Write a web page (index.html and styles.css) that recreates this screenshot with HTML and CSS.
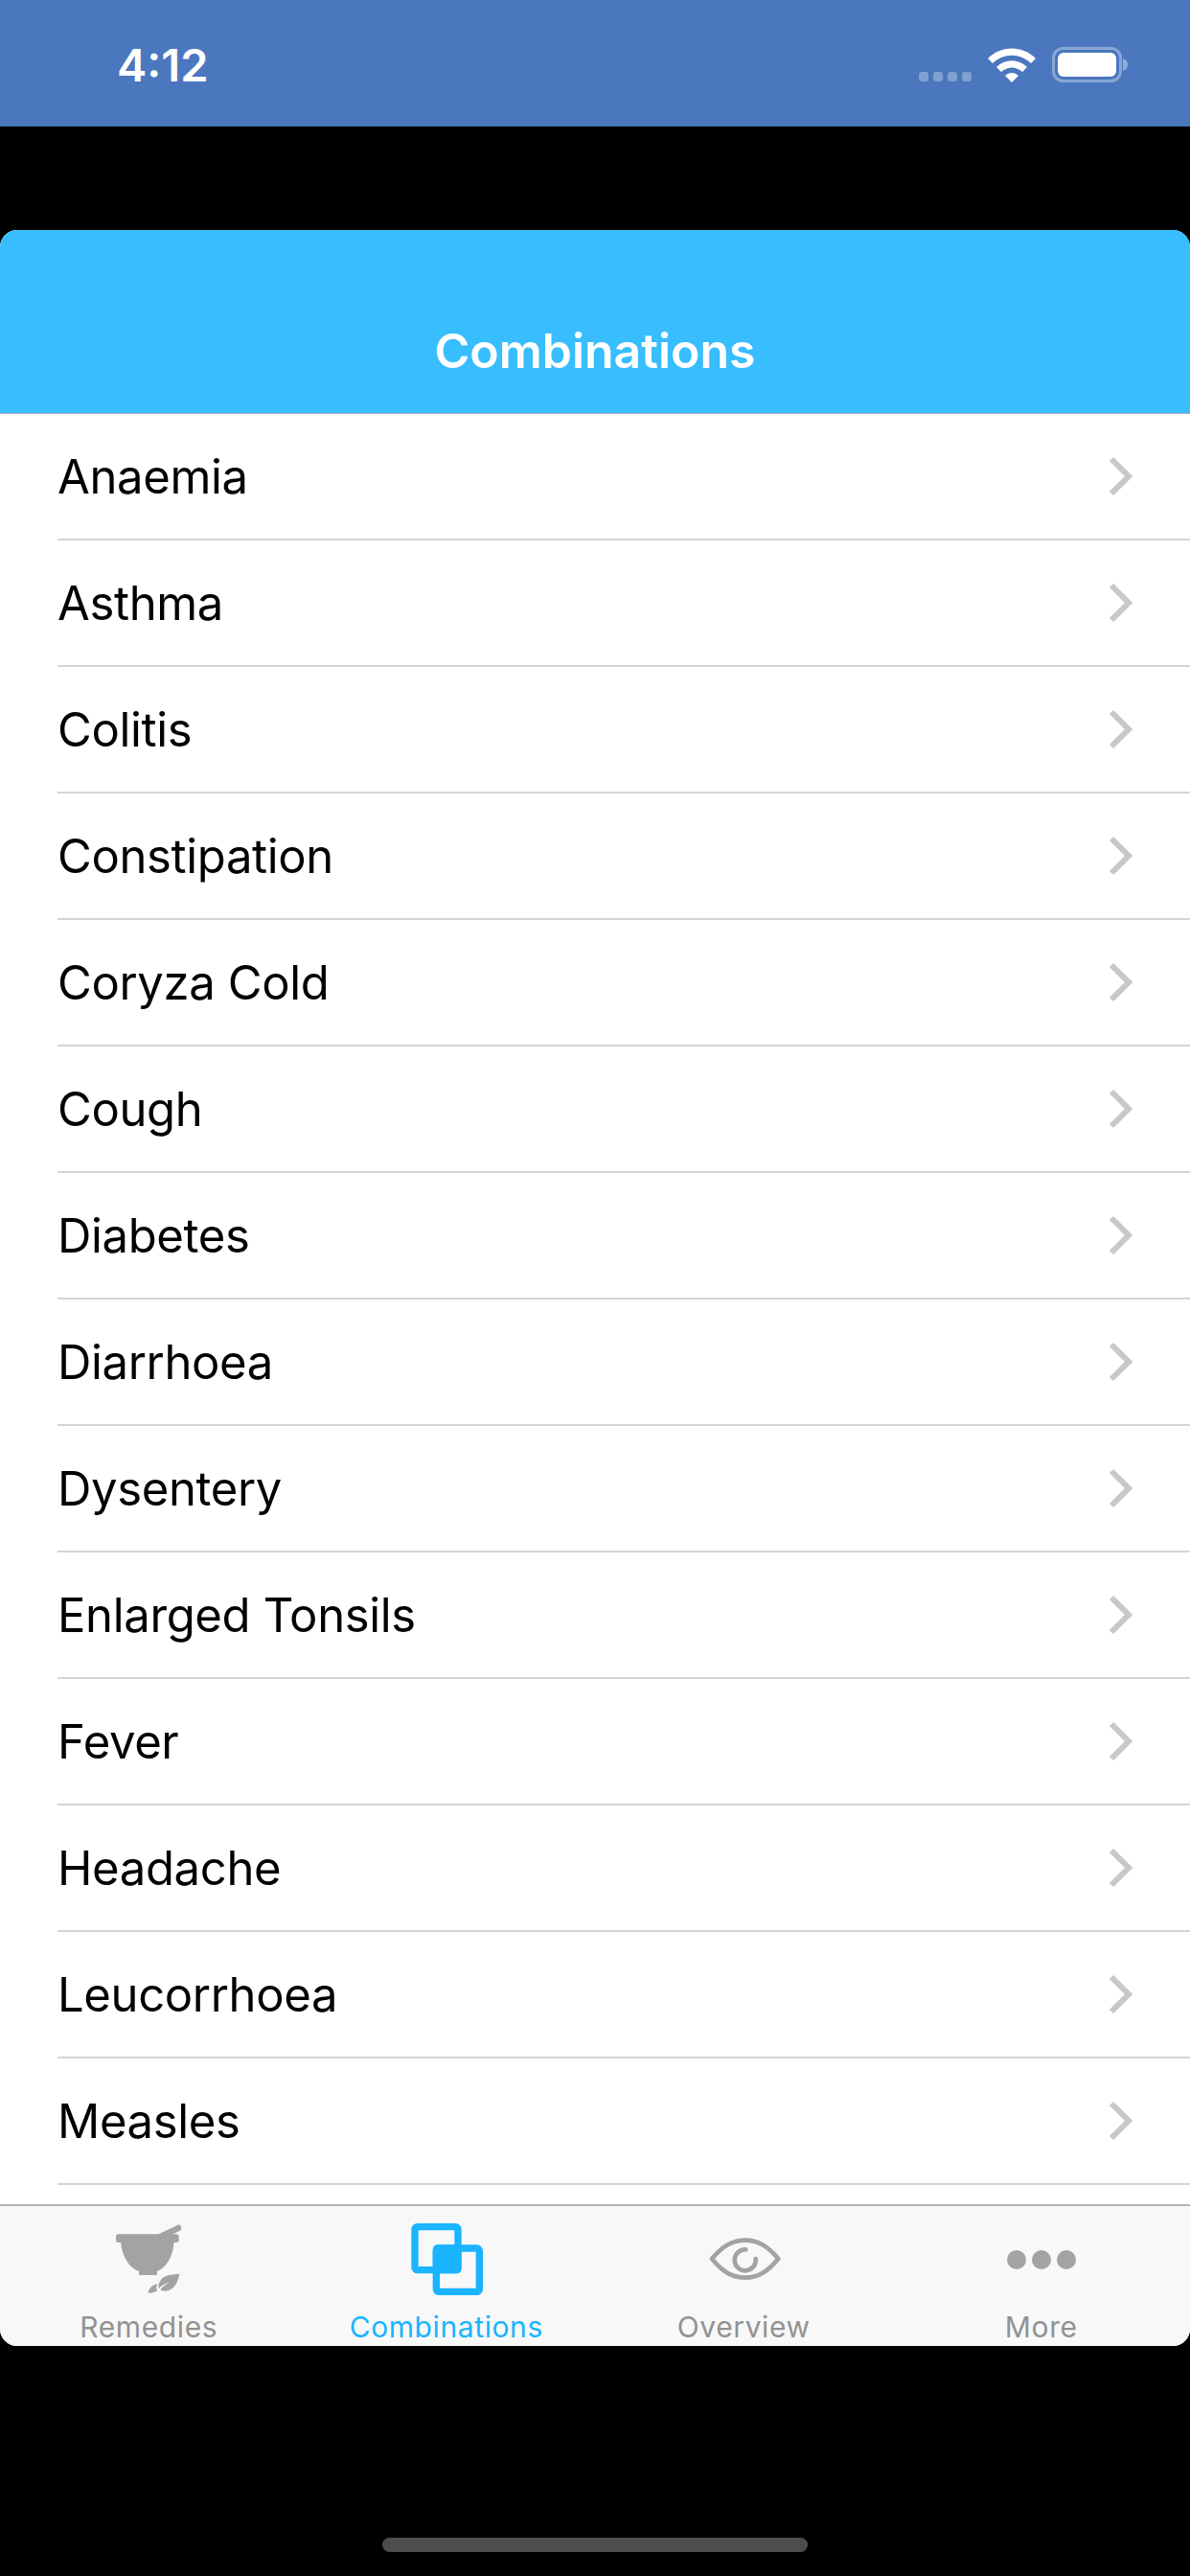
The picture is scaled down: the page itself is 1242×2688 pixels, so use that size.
FILE: index.html
```html
<!DOCTYPE html>
<html lang="en">
<head>
  <meta charset="UTF-8">
  <meta name="viewport" content="width=device-width, initial-scale=1">
  <title>Combinations</title>
  <link rel="stylesheet" href="styles.css">
</head>
<body>
<svg class="defs" width="0" height="0">
  <symbol id="chevron" viewBox="0 0 30 44">
    <path d="M5 4 L23 22 L5 40" fill="none" stroke="#c7c7cc" stroke-width="6"/>
  </symbol>
</svg>

<div class="status-bar">
  <span class="time">4:12</span>
  <div class="status-icons">
    <svg class="signal" width="55" height="10" viewBox="0 0 55 10">
      <rect x="0" width="10" height="10" rx="3"/>
      <rect x="15" width="10" height="10" rx="3"/>
      <rect x="30" width="10" height="10" rx="3"/>
      <rect x="45" width="10" height="10" rx="3"/>
    </svg>
    <svg class="wifi" width="50" height="36" viewBox="0 0 50 36">
      <path d="M0 11 C14 -3 36 -3 50 11 L45 16 C33 5 17 5 5 16 Z"/>
      <path d="M9 20 C18 11 32 11 41 20 L36 25 C29 19 21 19 14 25 Z"/>
      <path d="M18 29 C22 25 28 25 32 29 L25 36 Z"/>
    </svg>
    <svg class="battery" width="79" height="37" viewBox="0 0 79 37">
      <rect x="1.5" y="1.5" width="70" height="34" rx="10" fill="none" stroke="#fff" stroke-opacity="0.35" stroke-width="3"/>
      <path d="M74 12 C77 13 79 15 79 18.500 C79 22 77 24 74 25 Z" fill="#fff" fill-opacity="0.4"/>
      <rect x="6" y="6" width="61" height="25" rx="6" fill="#fff"/>
    </svg>
  </div>
</div>

<div class="spacer"></div>

<div class="app">
  <header class="nav-bar">
    <h1>Combinations</h1>
  </header>

  <ul class="list">
    <li><span>Anaemia</span><svg class="chevron"><use href="#chevron"/></svg></li>
    <li><span>Asthma</span><svg class="chevron"><use href="#chevron"/></svg></li>
    <li><span>Colitis</span><svg class="chevron"><use href="#chevron"/></svg></li>
    <li><span>Constipation</span><svg class="chevron"><use href="#chevron"/></svg></li>
    <li><span>Coryza Cold</span><svg class="chevron"><use href="#chevron"/></svg></li>
    <li><span>Cough</span><svg class="chevron"><use href="#chevron"/></svg></li>
    <li><span>Diabetes</span><svg class="chevron"><use href="#chevron"/></svg></li>
    <li><span>Diarrhoea</span><svg class="chevron"><use href="#chevron"/></svg></li>
    <li><span>Dysentery</span><svg class="chevron"><use href="#chevron"/></svg></li>
    <li><span>Enlarged Tonsils</span><svg class="chevron"><use href="#chevron"/></svg></li>
    <li><span>Fever</span><svg class="chevron"><use href="#chevron"/></svg></li>
    <li><span>Headache</span><svg class="chevron"><use href="#chevron"/></svg></li>
    <li><span>Leucorrhoea</span><svg class="chevron"><use href="#chevron"/></svg></li>
    <li><span>Measles</span><svg class="chevron"><use href="#chevron"/></svg></li>
  </ul>

  <nav class="tab-bar">
    <div class="tab">
      <svg class="tab-icon" viewBox="0 0 390 300">
        <g fill="#a3a3a3">
          <rect x="93" y="94" width="197" height="26" rx="8"/>
          <path d="M108 118 L275 118 C272 165 250 200 222 210 L222 222 L165 222 L165 210 C135 200 112 165 108 118 Z"/>
          <path d="M222 96 L287 65 C294 63 301 72 297 79 C296 81 295 82 293 83 L262 98 Z"/>
          <path d="M292 218 C288 245 272 272 246 272 C240 272 235 270 232 267 C240 258 250 250 262 243 C248 248 236 255 227 264 C224 250 232 232 250 225 C263 220 278 219 292 218 Z"/>
          <path d="M193 277 C197 262 208 252 224 250 C219 256 218 264 222 271 C212 278 203 279 193 277 Z"/>
        </g>
      </svg>
      <span class="tab-label">Remedies</span>
    </div>
    <div class="tab active">
      <svg class="tab-icon" viewBox="0 0 390 300">
        <rect x="96" y="71" width="135" height="135" rx="8" fill="none" stroke="#1ab4ff" stroke-width="22"/>
        <rect x="163" y="138" width="135" height="136" rx="8" fill="none" stroke="#1ab4ff" stroke-width="22"/>
        <rect x="152" y="127" width="90" height="90" rx="14" fill="#1ab4ff"/>
      </svg>
      <span class="tab-label">Combinations</span>
    </div>
    <div class="tab">
      <svg class="tab-icon" viewBox="-30 -60 390 300">
        <path d="M66 111 C100 70 130 53 170 53 C210 53 240 70 274 111 C240 152 210 170 170 170 C130 170 100 152 66 111 Z" fill="none" stroke="#a3a3a3" stroke-width="14" stroke-linejoin="round"/>
        <path d="M172 82 A33 33 0 1 0 203 111" fill="none" stroke="#a3a3a3" stroke-width="14" stroke-linecap="round"/>
      </svg>
      <span class="tab-label">Overview</span>
    </div>
    <div class="tab">
      <svg class="tab-icon" viewBox="0 0 130 100">
        <circle cx="39" cy="58" r="10" fill="#a3a3a3"/>
        <circle cx="65" cy="58" r="10" fill="#a3a3a3"/>
        <circle cx="91" cy="58" r="10" fill="#a3a3a3"/>
      </svg>
      <span class="tab-label">More</span>
    </div>
  </nav>
</div>

<div class="home-area">
  <div class="home-indicator"></div>
</div>
</body>
</html>
```

FILE: styles.css
```css
* { box-sizing: border-box; }

html, body {
  margin: 0;
  padding: 0;
  background-color: #000;
}

body {
  width: 1242px;
  height: 2688px;
  overflow: hidden;
  font-family: Inter, "Liberation Sans", sans-serif;
}

.defs {
  position: absolute;
}

.status-bar {
  height: 132px;
  background-color: #4a77bd;
  color: #fff;
  display: flex;
  justify-content: space-between;
  padding: 49px 65px 0 122px;
}

.time {
  font-size: 47px;
  line-height: 38px;
  font-weight: 600;
}

.status-icons {
  display: flex;
  gap: 17px;
  height: 37px;
}

.signal {
  align-self: flex-end;
  margin-bottom: 1px;
  fill: #fff;
  fill-opacity: 0.3;
}

.wifi {
  fill: #fff;
  margin-top: 1px;
}

.spacer {
  height: 108px;
}

.app {
  height: 2208px;
  background-color: #fff;
  border-radius: 18px;
  overflow: hidden;
  display: flex;
  flex-direction: column;
}

.nav-bar {
  height: 192px;
  flex-shrink: 0;
  background-color: #38bdfe;
  border-bottom: 1px solid #b2b2b2;
  display: flex;
  justify-content: center;
  align-items: flex-end;
  padding-bottom: 35px;
}

.nav-bar h1 {
  margin: 0;
  color: #fff;
  font-size: 50px;
  line-height: 60px;
  font-weight: 600;
}

.list {
  list-style: none;
  margin: 0;
  padding: 0;
  flex: 1;
  overflow: hidden;
}

.list li {
  height: 132px;
  margin-left: 60px;
  padding-right: 57px;
  border-bottom: 2px solid #d4d4d6;
  display: flex;
  justify-content: space-between;
  align-items: center;
  font-size: 49px;
  letter-spacing: -0.35px;
  color: #000;
}

.chevron {
  width: 30px;
  height: 44px;
  display: block;
}

.tab-bar {
  height: 148px;
  flex-shrink: 0;
  background-color: #f8f8f8;
  border-top: 2px solid #b2b2b2;
  display: grid;
  grid-template-columns: repeat(4, 1fr);
}

.tab {
  display: flex;
  flex-direction: column;
  align-items: center;
  color: #929292;
}

.tab.active {
  color: #1ab4ff;
}

.tab-icon {
  width: 130px;
  height: 100px;
  margin-top: -2px;
  display: block;
}

.tab-label {
  font-size: 30px;
  line-height: 36px;
  letter-spacing: 0.6px;
  margin-top: 10px;
}

.home-area {
  height: 240px;
  display: flex;
  justify-content: center;
  align-items: flex-end;
  padding-bottom: 25px;
}

.home-indicator {
  width: 444px;
  height: 15px;
  border-radius: 8px;
  background-color: #4d4d4d;
}
```
